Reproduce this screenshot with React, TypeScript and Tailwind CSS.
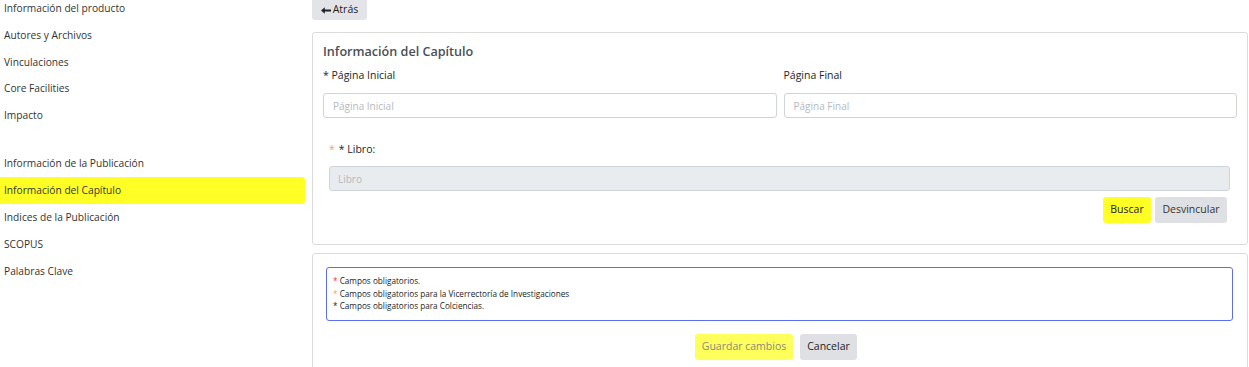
import React from "react";

const SIDE_TOP = ["Información del producto", "Autores y Archivos", "Vinculaciones", "Core Facilities", "Impacto"];
const SIDE_BOTTOM = ["Información de la Publicación", "Información del Capítulo", "Indices de la Publicación", "SCOPUS", "Palabras Clave"];

const ACTIVE = "Información del Capítulo";

const font = { fontFamily: "'Open Sans', 'Noto Sans', sans-serif" };

export default function App() {
  return (
    <div className="flex h-[367px] w-[1249px] overflow-hidden bg-white text-[#212529]" style={font}>
      {/* Sidebar */}
      <aside className="w-[305px] shrink-0 pt-[1px]">
        {SIDE_TOP.map((item) => (
          <div key={item} className="flex h-[26.8px] items-start pl-[4px] text-[10.2px] leading-[15px] text-[#333]">
            {item}
          </div>
        ))}
        <div className="h-[15px]" />
        {SIDE_BOTTOM.map((item) => (
          <div
            key={item}
            className={
              item === ACTIVE
                ? "flex h-[27px] items-center rounded-r-[3px] bg-[#ffff26] pl-[4px] text-[10.2px] text-[#333]"
                : "flex h-[27px] items-center pl-[4px] text-[10.2px] text-[#333]"
            }
          >
            {item}
          </div>
        ))}
      </aside>

      {/* Main */}
      <main className="ml-[7px] flex-1 pr-[1px]">
        <button className="flex h-[20px] w-[55px] items-center justify-center gap-[2px] rounded-b-[3px] bg-[#e2e4e8] text-[10.5px] text-[#222]">
          <svg width="10" height="7" viewBox="0 0 10 7" className="mt-[1px]">
            <path d="M0 3.5 L3.8 0.3 L3.8 2.6 L10 2.6 L10 4.4 L3.8 4.4 L3.8 6.7 Z" fill="#222" />
          </svg>
          Atrás
        </button>

        {/* Card 1 */}
        <section className="mt-[12px] h-[213px] rounded-[3px] border border-[#dcdcdc] px-[10px] pt-[10px]">
          <h2 className="text-[12.6px] font-semibold leading-[18px] text-[#495057]">Información del Capítulo</h2>
          <div className="mt-[7px] grid grid-cols-2 gap-[7px]">
            <div>
              <label className="block text-[10.5px] font-medium leading-[14px] text-[#212529]">* Página Inicial</label>
              <input
                placeholder="Página Inicial"
                className="mt-[11px] h-[25px] w-full rounded-[3px] border border-[#ced4da] px-[9px] text-[10px] placeholder:text-[#b5b9be]"
              />
            </div>
            <div>
              <label className="block text-[10.5px] font-medium leading-[14px] text-[#212529]">Página Final</label>
              <input
                placeholder="Página Final"
                className="mt-[11px] h-[25px] w-full rounded-[3px] border border-[#ced4da] px-[9px] text-[10px] placeholder:text-[#b5b9be]"
              />
            </div>
          </div>

          <div className="mx-[6px] mt-[24px] mr-[7px]">
            <div className="text-[10.5px] font-medium leading-[14px]">
              <span className="mr-[4px] text-[#f4a460]">*</span>* Libro:
            </div>
            <input
              disabled
              placeholder="Libro"
              className="mt-[10px] h-[25px] w-full rounded-[3px] border border-[#ced4da] bg-[#e9ecef] px-[8px] text-[10px] placeholder:text-[#b5b9be]"
            />
            <div className="mt-[6px] flex justify-end gap-[4px] pr-[3px]">
              <button className="h-[26px] w-[48px] rounded-[3px] bg-[#ffff26] text-[10.5px] text-[#222]">Buscar</button>
              <button className="h-[26px] w-[72px] rounded-[3px] bg-[#dee0e3] text-[10.5px] text-[#333]">Desvincular</button>
            </div>
          </div>
        </section>

        {/* Card 2 */}
        <section className="mt-[8px] h-[130px] rounded-[3px] border border-[#dcdcdc] px-[13px] pt-[13px]">
          <div className="mr-[1px] h-[54px] rounded-[3px] border border-[#5b6ef0] px-[6px] pt-[7px] text-[8.2px] leading-[12.5px] text-[#222]">
            <div>
              <span className="text-[#e53935]">*</span> Campos obligatorios.
            </div>
            <div>
              <span className="text-[#f4a460]">*</span> Campos obligatorios para la Vicerrectoría de Investigaciones
            </div>
            <div>* Campos obligatorios para Colciencias.</div>
          </div>
          <div className="mt-[13px] flex justify-center gap-[7px] pr-[8px]">
            <button className="h-[26px] w-[98px] rounded-[3px] bg-[#ffff5c] text-[10.5px] text-[#8a8a7a]">Guardar cambios</button>
            <button className="h-[26px] w-[57px] rounded-[3px] bg-[#dee0e3] text-[10.5px] text-[#222]">Cancelar</button>
          </div>
        </section>
      </main>
    </div>
  );
}
